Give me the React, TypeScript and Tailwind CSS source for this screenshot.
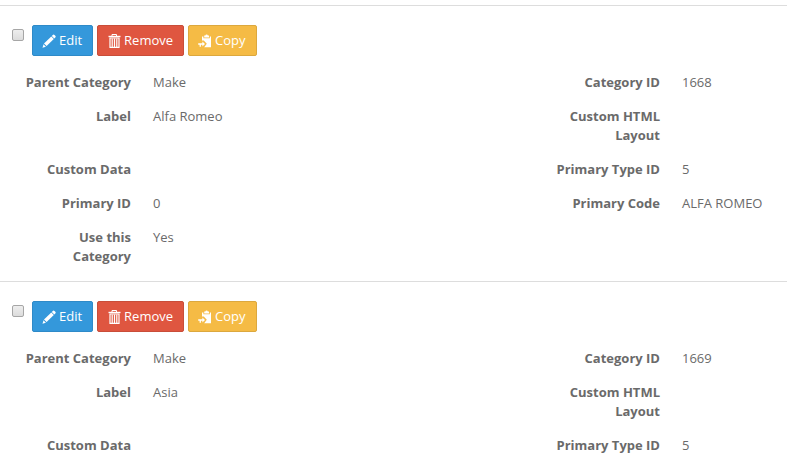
import React, { useState } from 'react';

interface Field {
  label: string;
  value: string;
}

interface Category {
  id: string;
  fields: Field[];
}

// Fields run left, right, left, right...
const categories: Category[] = [
  {
    id: '1668',
    fields: [
      { label: 'Parent Category', value: 'Make' },
      { label: 'Category ID', value: '1668' },
      { label: 'Label', value: 'Alfa Romeo' },
      { label: 'Custom HTML Layout', value: '' },
      { label: 'Custom Data', value: '' },
      { label: 'Primary Type ID', value: '5' },
      { label: 'Primary ID', value: '0' },
      { label: 'Primary Code', value: 'ALFA ROMEO' },
      { label: 'Use this Category', value: 'Yes' },
    ],
  },
  {
    id: '1669',
    fields: [
      { label: 'Parent Category', value: 'Make' },
      { label: 'Category ID', value: '1669' },
      { label: 'Label', value: 'Asia' },
      { label: 'Custom HTML Layout', value: '' },
      { label: 'Custom Data', value: '' },
      { label: 'Primary Type ID', value: '5' },
    ],
  },
];

const PencilIcon = () => (
  <svg className="w-3.5 h-3.5" viewBox="0 0 14 14" fill="currentColor" aria-hidden="true">
    <path d="M10.8.9a1.2 1.2 0 0 1 1.7 0l.8.8a1.2 1.2 0 0 1 0 1.7l-1 1-2.5-2.5z" />
    <path d="M9.3 2.4l2.5 2.5-7.2 7.2L2 9.6z" />
    <path d="M1.5 10.3l2.4 2.4-3.4 1z" />
  </svg>
);

const TrashIcon = () => (
  <svg className="w-3.5 h-3.5" viewBox="0 0 14 14" fill="none" stroke="currentColor" aria-hidden="true">
    <path d="M5 2V.5h4.5V2" />
    <path d="M1.5 2.5h12" strokeWidth="1.4" />
    <path d="M3 4v9.4h9V4z" strokeWidth="1.2" />
    <path d="M5.2 4.5V13M7.5 4.5V13M9.8 4.5V13" strokeWidth="1.2" />
  </svg>
);

const PasteIcon = () => (
  <svg className="w-3.5 h-3.5" viewBox="0 0 14 14" fill="currentColor" aria-hidden="true">
    <path d="M6.2 1.6h1.2a1.2 1.2 0 0 1 2.4 0H11v1.8H6.2z" />
    <path d="M4 2.4h1.4v1.8h6.4V2.4H13v10.8H6.2l2.6-3.4-3-3.2H4z" />
    <path d="M4.4 7.4l2.6 2.5-2.6 2.5v-1.7H2.9v2H1.6v-2H.2V9.2h4.2z" />
  </svg>
);

interface ActionButtonProps {
  label: string;
  icon: React.ReactNode;
  className: string;
}

const ActionButton: React.FC<ActionButtonProps> = ({ label, icon, className }) => (
  <button
    type="button"
    className={`flex items-center gap-[3px] h-[31px] pl-[9px] pr-2.5 border rounded-xs text-white cursor-pointer ${className}`}
  >
    {icon}
    <span>{label}</span>
  </button>
);

const CategoryRecord: React.FC<{ category: Category }> = ({ category }) => {
  const [checked, setChecked] = useState(false);

  return (
    <li className="border-t border-[#dddddd] pt-[19px]">
      {/* Actions */}
      <div className="flex items-start gap-1 pl-3">
        <input
          type="checkbox"
          aria-label={`Select category ${category.id}`}
          checked={checked}
          onChange={() => setChecked(!checked)}
          className="appearance-none w-3 h-3 mt-1 mr-1 border border-[#a6a6a6] rounded-xs bg-linear-to-b from-[#eeeeee] to-[#dcdcdc] checked:from-[#3498db] checked:to-[#2383c4]"
        />
        <ActionButton label="Edit" icon={<PencilIcon />} className="bg-[#3498db] border-[#2e8ac8]" />
        <ActionButton label="Remove" icon={<TrashIcon />} className="bg-[#df5640] border-[#c94d39]" />
        <ActionButton label="Copy" icon={<PasteIcon />} className="bg-[#f5bb45] border-[#dca83e]" />
      </div>

      {/* Details */}
      <dl className="grid grid-cols-[1fr_217px] gap-y-[15px] pt-[17px] pl-[25px] pr-4">
        {category.fields.map((field) => (
          <div key={field.label} className="flex gap-[22px]">
            <dt className="w-[106px] shrink-0 text-right font-bold">{field.label}</dt>
            <dd>{field.value}</dd>
          </div>
        ))}
      </dl>
    </li>
  );
};

const App: React.FC = () => {
  return (
    <main className="bg-white pt-[5px] font-['Open_Sans',sans-serif] text-[13px] leading-[19px] text-[#6a6a6a]">
      <ul className="flex flex-col gap-[15px]">
        {categories.map((category) => (
          <CategoryRecord key={category.id} category={category} />
        ))}
      </ul>
    </main>
  );
};

export default App;
